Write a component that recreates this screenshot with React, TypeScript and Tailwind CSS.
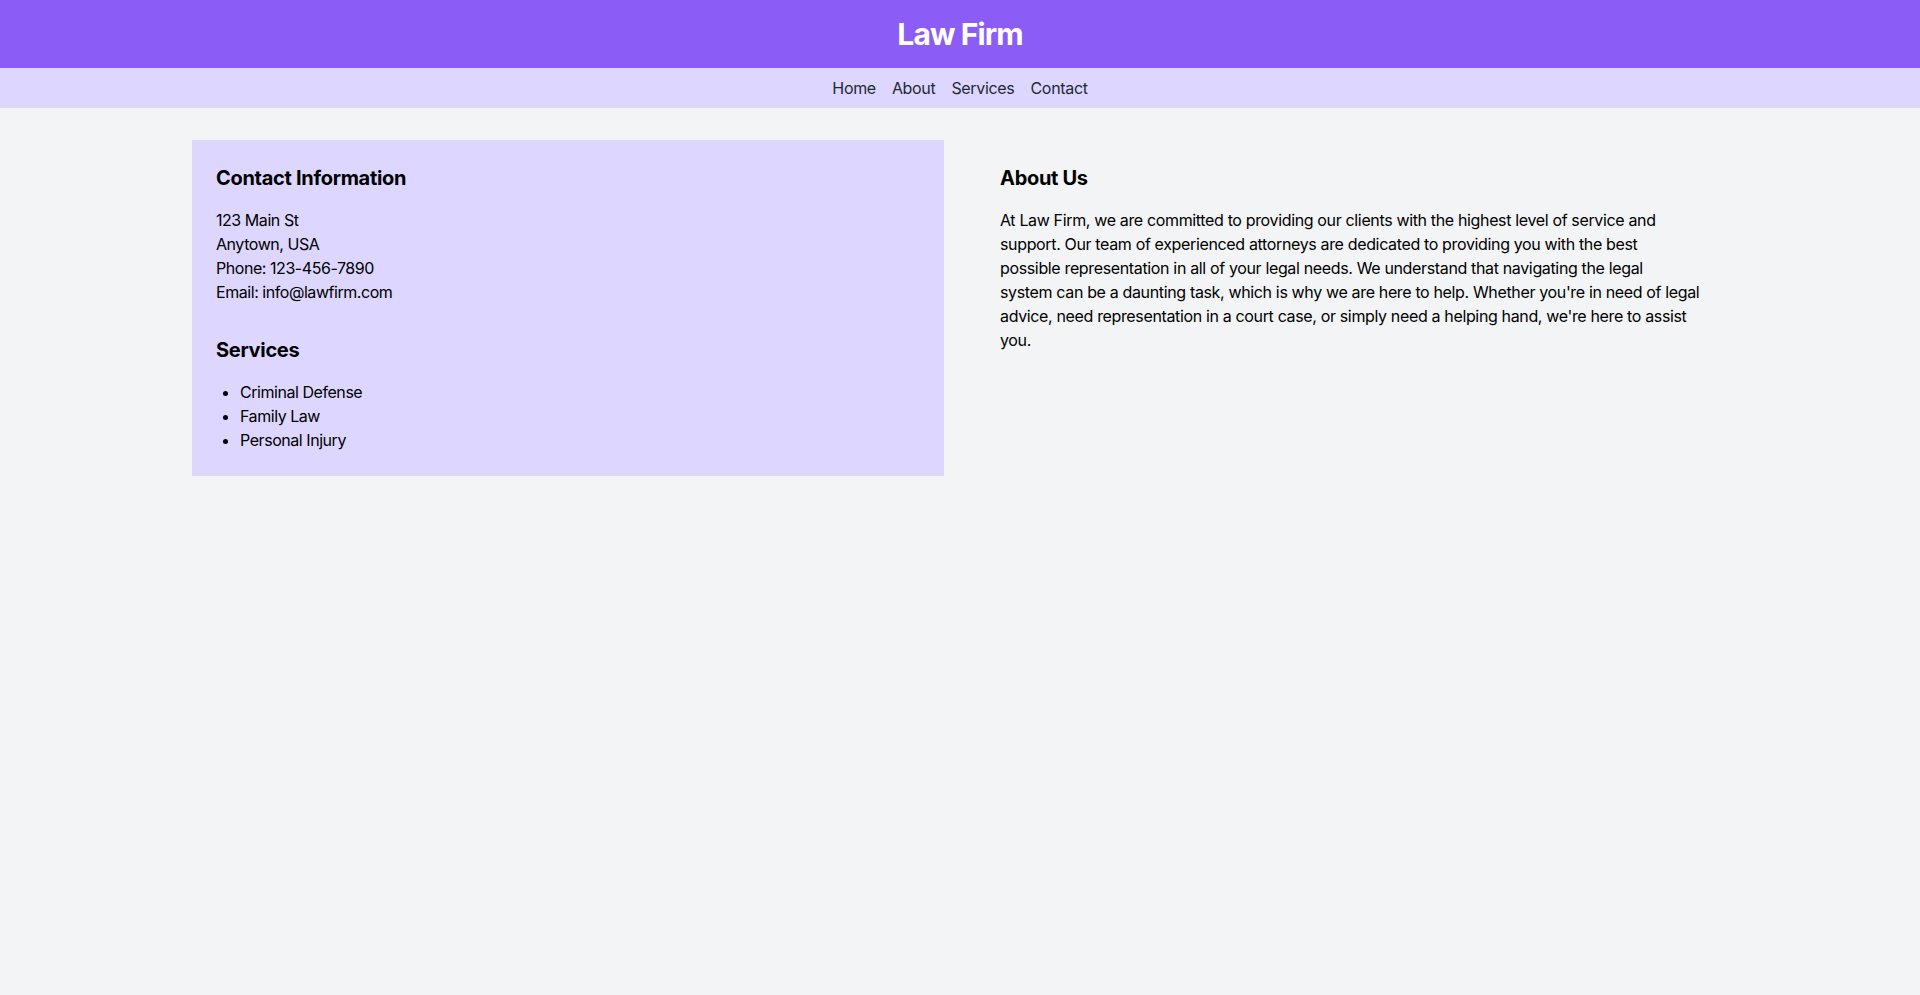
import React from 'react';

const services = ['Criminal Defense', 'Family Law', 'Personal Injury'];

const App = () => {
  return (
    <div className="min-h-screen bg-[#f3f4f6] text-black font-['Inter',sans-serif] tracking-[-0.028em]">
      {/* Header */}
      <header className="bg-[#8b5cf6] p-4">
        <h1 className="text-center text-3xl font-bold text-white tracking-[-0.03em]">Law Firm</h1>
      </header>

      {/* Nav */}
      <nav className="bg-[#ddd6fe] py-2">
        <ul className="flex justify-center space-x-4 text-base text-[#1f2937] tracking-[-0.02em]">
          <li><a href="#home">Home</a></li>
          <li><a href="#about">About</a></li>
          <li><a href="#services">Services</a></li>
          <li><a href="#contact">Contact</a></li>
        </ul>
      </nav>

      {/* Main */}
      <main className="container mx-auto py-8">
        <div className="grid grid-cols-2 gap-8">
          <section className="bg-[#ddd6fe] p-6">
            <h2 className="mb-4 text-xl font-bold tracking-[-0.015em]">Contact Information</h2>
            <div className="mb-8">
              <p>123 Main St</p>
              <p>Anytown, USA</p>
              <p>Phone: 123-456-7890</p>
              <p>Email: info@lawfirm.com</p>
            </div>
            <h2 className="mb-4 text-xl font-bold tracking-[-0.015em]">Services</h2>
            <ul className="list-disc pl-6">
              {services.map((s) => (
                <li key={s}>{s}</li>
              ))}
            </ul>
          </section>

          <section className="p-6">
            <h2 className="mb-4 text-xl font-bold tracking-[-0.015em]">About Us</h2>
            {/* line breaks kept as in the design */}
            <p className="whitespace-nowrap tracking-[-0.022em]">
              At Law Firm, we are committed to providing our clients with the highest level of service and<br />
              support. Our team of experienced attorneys are dedicated to providing you with the best<br />
              possible representation in all of your legal needs. We understand that navigating the legal<br />
              system can be a daunting task, which is why we are here to help. Whether you're in need of legal<br />
              advice, need representation in a court case, or simply need a helping hand, we're here to assist<br />
              you.
            </p>
          </section>
        </div>
      </main>
    </div>
  );
};

export default App;
